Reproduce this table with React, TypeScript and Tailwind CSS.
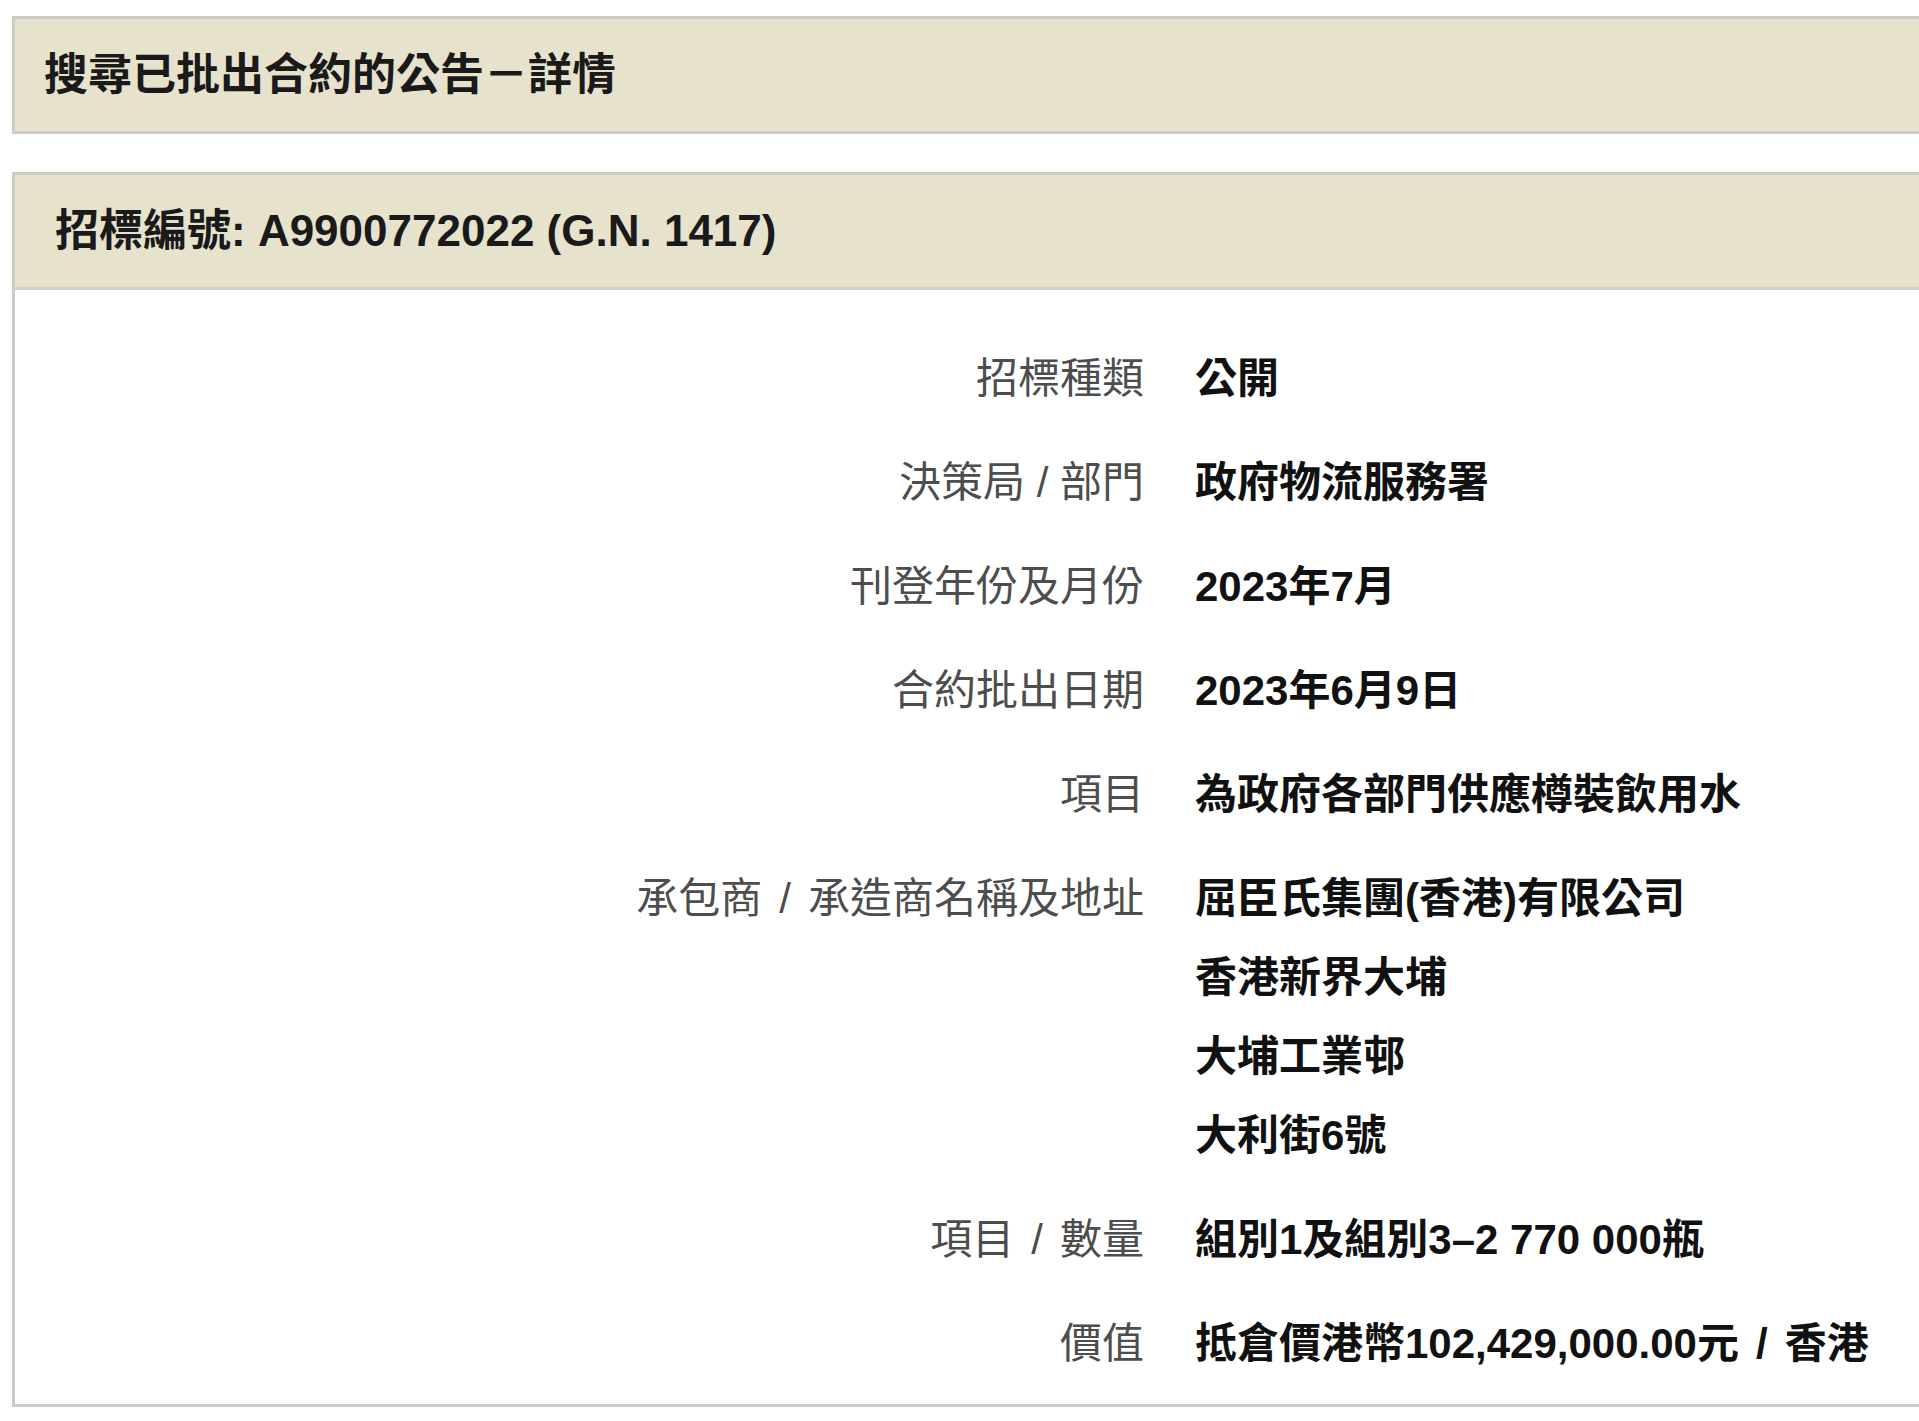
import React from 'react';

const font = 'font-["Liberation_Sans","Noto_Sans_CJK_TC",sans-serif]';

const Slash = () => <span className="px-[17px]">/</span>;

const rows: { label: React.ReactNode; value: React.ReactNode[] }[] = [
  { label: '招標種類', value: ['公開'] },
  { label: '決策局 / 部門', value: ['政府物流服務署'] },
  { label: '刊登年份及月份', value: ['2023年7月'] },
  { label: '合約批出日期', value: ['2023年6月9日'] },
  { label: '項目', value: ['為政府各部門供應樽裝飲用水'] },
  {
    label: <>承包商<Slash />承造商名稱及地址</>,
    value: ['屈臣氏集團(香港)有限公司', '香港新界大埔', '大埔工業邨', '大利街6號'],
  },
  { label: <>項目<Slash />數量</>, value: ['組別1及組別3–2 770 000瓶'] },
  { label: '價值', value: [<>抵倉價港幣102,429,000.00元<Slash />香港</>] },
];

export default function App() {
  return (
    <div className={`${font} bg-white min-h-[1421px] w-[1919px] overflow-hidden pt-4 pl-3`}>
      <div className="h-[118px] flex items-center pl-[29px] bg-[#e6e2cc] border-y-[3px] border-l-[3px] border-[#cdcbc3]">
        <h1 className="text-[44px] font-bold text-[#1a1a1a] leading-none">搜尋已批出合約的公告－詳情</h1>
      </div>

      <div className="mt-[38px] border-l-[3px] border-b-[3px] border-t-[3px] border-[#cdcbc3]">
        <div className="h-[115px] flex items-center pl-[40px] bg-[#e6e2cc] border-b-[3px] border-[#d2d0c9]">
          <h2 className="text-[44px] font-bold text-[#1a1a1a] leading-none whitespace-nowrap">
            招標編號: A9900772022 (G.N. 1417)
          </h2>
        </div>

        <div className="pt-[49px] pb-[21px] flex flex-col gap-[25px]">
          {rows.map((row, i) => (
            <div key={i} className="grid grid-cols-[1129px_1fr] gap-x-[51px]">
              <div className="text-right text-[42px] leading-[79px] text-[#4d4d4d] whitespace-nowrap">{row.label}</div>
              <div className="flex flex-col">
                {row.value.map((line, j) => (
                  <span key={j} className="text-[42px] leading-[79px] font-bold text-[#111] whitespace-nowrap">
                    {line}
                  </span>
                ))}
              </div>
            </div>
          ))}
        </div>
      </div>
    </div>
  );
}
